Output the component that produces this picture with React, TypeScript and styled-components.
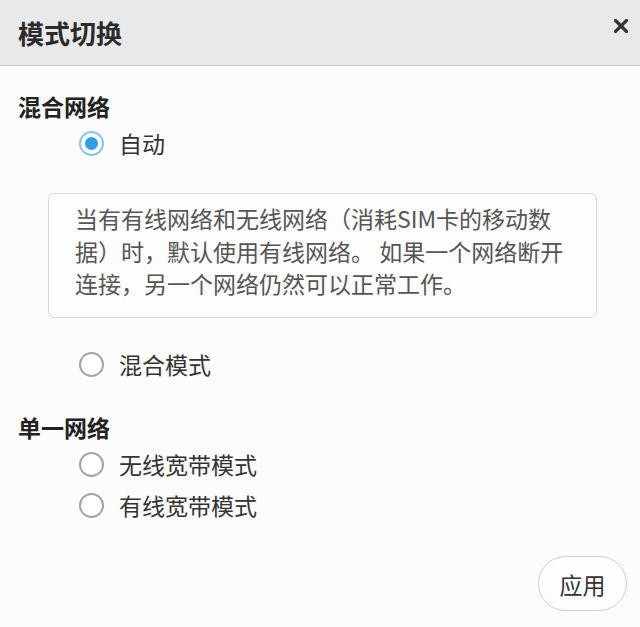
import React, { useState } from 'react';
import styled, { createGlobalStyle } from 'styled-components';

const GlobalStyle = createGlobalStyle`
  html, body {
    margin: 0;
    padding: 0;
    background: #fcfcfd;
  }
  body {
    font-family: "Noto Sans CJK SC", "Noto Sans", sans-serif;
  }
`;

type Option = {
  id: string
  label: string
}

const mixedOptions: Option[] = [{ id: 'auto', label: '自动' }];
const singleOptions: Option[] = [
  { id: 'wireless', label: '无线宽带模式' },
  { id: 'wired', label: '有线宽带模式' },
];

const Radio = (props: { label: string; checked: boolean; onSelect: () => void }) => {
  return (
    <RadioRow onClick={props.onSelect}>
      <RadioCircle $checked={props.checked}>{props.checked && <RadioDot />}</RadioCircle>
      <RadioLabel>{props.label}</RadioLabel>
    </RadioRow>
  );
};

export default function App() {
  const [mode, setMode] = useState('auto');

  return (
    <>
      <GlobalStyle />
      <Dialog>
        <Header>
          <Title>模式切换</Title>
          <CloseButton aria-label="close">
            <svg width="14" height="14" viewBox="0 0 14 14">
              <path d="M1.5 1.5 L12.5 12.5 M12.5 1.5 L1.5 12.5" stroke="#333" strokeWidth="3.2" strokeLinecap="square" />
            </svg>
          </CloseButton>
        </Header>
        <Content>
          <SectionTitle>混合网络</SectionTitle>
          {mixedOptions.map((o) => (
            <Radio key={o.id} label={o.label} checked={mode === o.id} onSelect={() => setMode(o.id)} />
          ))}
          <Description>
            当有有线网络和无线网络（消耗SIM卡的移动数
            <br />
            据）时，默认使用有线网络。 如果一个网络断开
            <br />
            连接，另一个网络仍然可以正常工作。
          </Description>
          <Radio label="混合模式" checked={mode === 'mixed'} onSelect={() => setMode('mixed')} />
          <SectionTitle $spaced>单一网络</SectionTitle>
          {singleOptions.map((o) => (
            <Radio key={o.id} label={o.label} checked={mode === o.id} onSelect={() => setMode(o.id)} />
          ))}
          <Footer>
            <ApplyButton>应用</ApplyButton>
          </Footer>
        </Content>
      </Dialog>
    </>
  );
}

const Dialog = styled.div`
  width: 640px;
  height: 627px;
  background: #fcfcfd;
  overflow: hidden;
`
const Header = styled.div`
  height: 65px;
  display: flex;
  align-items: center;
  justify-content: space-between;
  padding: 0 12px 0 18px;
  background: #e9e9eb;
  border-bottom: 1px solid #c9c9cc;
`
const Title = styled.h2`
  margin: 0;
  font-size: 26px;
  font-weight: 700;
  color: #2b2b2b;
  line-height: 34px;
`
const CloseButton = styled.button`
  align-self: flex-start;
  margin-top: 19px;
  padding: 0;
  border: none;
  background: none;
  width: 14px;
  height: 14px;
  display: flex;
  cursor: pointer;
`
const Content = styled.div`
  padding: 24px 13px 0 18px;
`
const SectionTitle = styled.h3<{ $spaced?: boolean }>`
  margin: ${(p) => (p.$spaced ? '26px' : '0')} 0 0;
  font-size: 23px;
  font-weight: 700;
  line-height: 33px;
  color: #222;
`
const RadioRow = styled.div`
  height: 41px;
  display: flex;
  align-items: center;
  padding-left: 61px;
  cursor: pointer;
`
const RadioCircle = styled.span<{ $checked: boolean }>`
  width: 25px;
  height: 25px;
  box-sizing: border-box;
  border-radius: 50%;
  border: 2px solid ${(p) => (p.$checked ? '#86c4ef' : '#a3a3a6')};
  background: #fff;
  display: flex;
  align-items: center;
  justify-content: center;
  flex-shrink: 0;
`
const RadioDot = styled.span`
  width: 13px;
  height: 13px;
  border-radius: 50%;
  background: #2f9de9;
`
const RadioLabel = styled.span`
  margin-left: 15px;
  font-size: 23px;
  line-height: 33px;
  color: #333;
`
const Description = styled.div`
  box-sizing: border-box;
  height: 125px;
  margin: 29px 30px 26px 30px;
  padding: 8px 20px 0 26px;
  border: 1px solid #d9d9dc;
  border-radius: 6px;
  background: #fdfdfe;
  font-size: 23px;
  line-height: 32.5px;
  color: #555;
  white-space: nowrap;
`
const Footer = styled.div`
  display: flex;
  justify-content: flex-end;
  margin-top: 30px;
`
const ApplyButton = styled.button`
  width: 89px;
  height: 55px;
  border: 1px solid #cfcfd2;
  border-radius: 28px;
  background: #fdfdfe;
  font-family: "Noto Sans CJK SC", sans-serif;
  font-size: 23px;
  color: #333;
  cursor: pointer;
`
